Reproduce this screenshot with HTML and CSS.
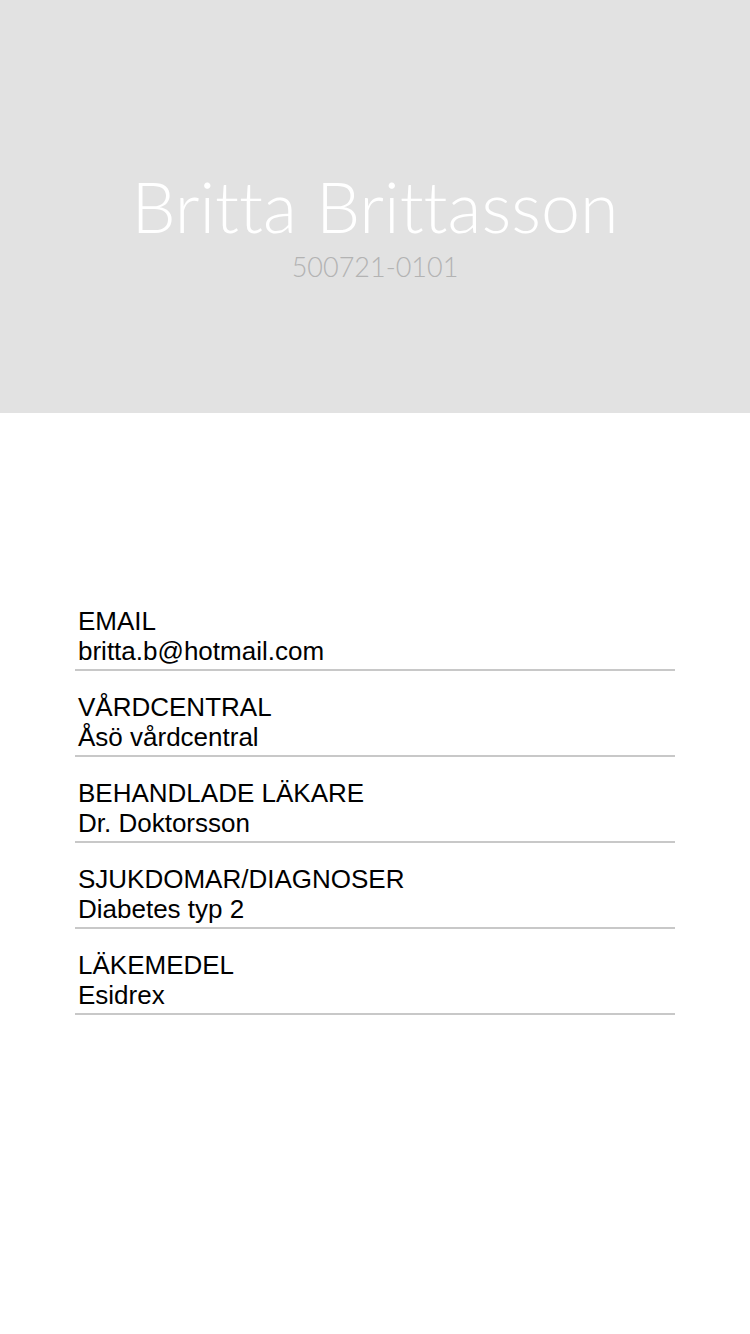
FILE: index.html
```html
<!DOCTYPE html>
<html lang="sv">
<head>
<meta charset="utf-8">
<title>Profil</title>
<link rel="stylesheet" href="styles.css">
</head>
<body>
<header class="hero">
  <h1 class="hero-name">Britta Brittasson</h1>
  <p class="hero-id">500721-0101</p>
</header>
<main class="info">
  <div class="row">
    <div class="label">EMAIL</div>
    <div class="value">britta.b@hotmail.com</div>
  </div>
  <div class="row">
    <div class="label">VÅRDCENTRAL</div>
    <div class="value">Åsö vårdcentral</div>
  </div>
  <div class="row">
    <div class="label">BEHANDLADE LÄKARE</div>
    <div class="value">Dr. Doktorsson</div>
  </div>
  <div class="row">
    <div class="label">SJUKDOMAR/DIAGNOSER</div>
    <div class="value">Diabetes typ 2</div>
  </div>
  <div class="row">
    <div class="label">LÄKEMEDEL</div>
    <div class="value">Esidrex</div>
  </div>
</main>
</body>
</html>
```
FILE: styles.css
```css
* { box-sizing: border-box; }
html, body { margin: 0; padding: 0; background: #ffffff; }
body { width: 750px; height: 1334px; overflow: hidden; }

.hero {
  height: 413px;
  background: #e2e2e2;
  display: flex;
  flex-direction: column;
  align-items: center;
  padding-top: 166px;
}
.hero-name {
  margin: 0;
  font-family: Lato, "Noto Sans", sans-serif;
  font-weight: 300;
  font-size: 70px;
  line-height: 80px;
  font-variant-ligatures: none;
  color: #ffffff;
}
.hero-id {
  margin: 0;
  padding-top: 4px;
  font-family: Lato, "Noto Sans", sans-serif;
  font-weight: 300;
  font-size: 27px;
  line-height: 34px;
  color: #b3b3b3;
}

.info {
  margin: 172px 0 0 75px;
  width: 600px;
  font-family: "Liberation Sans", Arial, sans-serif;
  font-size: 26px;
  line-height: 28px;
  color: #000000;
}
.row {
  padding: 22px 0 4px 3px;
  border-bottom: 2px solid #c8c8c8;
}
.value {
  padding-top: 2px;
}
```
